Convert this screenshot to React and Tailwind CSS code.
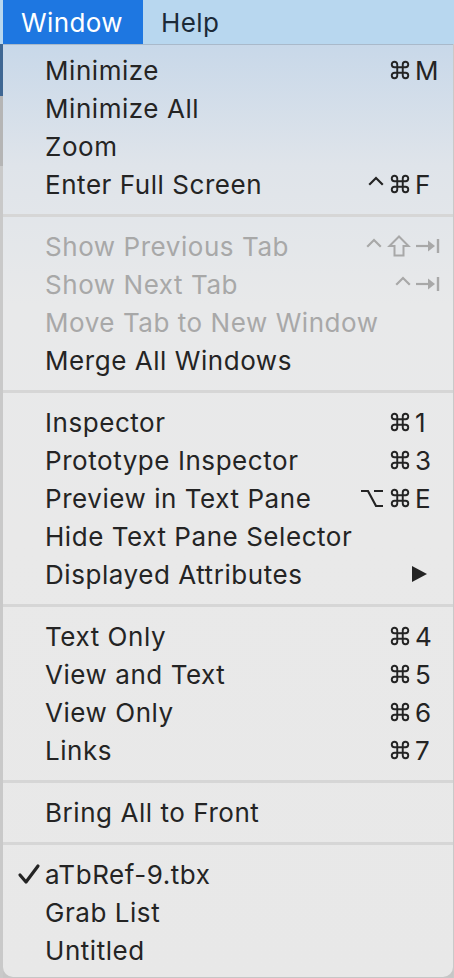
import React from "react";

const TXT = "#242424";
const DIS = "#a8a8a8";

function Cmd({ c }) {
  return (
    <svg width="22" height="22" viewBox="0 0 24 24" fill="none" stroke={c} strokeWidth="2.1" strokeLinecap="round" strokeLinejoin="round">
      <path d="M15 6v12a3 3 0 1 0 3-3H6a3 3 0 1 0 3 3V6a3 3 0 1 0-3 3h12a3 3 0 1 0-3-3" />
    </svg>
  );
}
function Ctrl({ c }) {
  return (
    <svg width="16" height="22" viewBox="0 0 16 22" fill="none" stroke={c} strokeWidth="2.2" strokeLinecap="square">
      <path d="M2 11 L8 5 L14 11" />
    </svg>
  );
}
function Shift({ c }) {
  return (
    <svg width="24" height="24" viewBox="0 0 24 24" fill="none" stroke={c} strokeWidth="2" strokeLinejoin="miter">
      <path d="M12 2.5 L2.5 12 H7.5 V21.5 H16.5 V12 H21.5 Z" />
    </svg>
  );
}
function Opt({ c }) {
  return (
    <svg width="24" height="22" viewBox="0 0 24 22" fill="none" stroke={c} strokeWidth="2.2">
      <path d="M1 4 H8 L16 19 H23 M14 4 H23" />
    </svg>
  );
}
function Tab({ c }) {
  return (
    <svg width="25" height="22" viewBox="0 0 25 22" fill="none">
      <path d="M1 11 H15" stroke={c} strokeWidth="2.2" />
      <path d="M13 5.5 L20 11 L13 16.5 Z" fill={c} />
      <path d="M23 4 V18" stroke={c} strokeWidth="2.4" />
    </svg>
  );
}

function Shortcut({ mods = [], k, c }) {
  return (
    <div className="flex items-center ml-auto">
      <div className="flex items-center justify-end gap-[5px]">
        {mods.map((m, i) => {
          if (m === "ctrl") return <Ctrl key={i} c={c} />;
          if (m === "cmd") return <Cmd key={i} c={c} />;
          if (m === "shift") return <Shift key={i} c={c} />;
          if (m === "opt") return <Opt key={i} c={c} />;
          return null;
        })}
      </div>
      <div className="w-[28px] ml-[4px] flex items-center">
        {k === "tab" ? <Tab c={c} /> : <span style={{ color: c }}>{k}</span>}
      </div>
    </div>
  );
}

function Item({ label, mods, k, disabled, check, submenu }) {
  const c = disabled ? DIS : TXT;
  return (
    <div className="h-[38px] flex items-center pl-[42px] pr-[10px] relative" style={{ color: c }}>
      {check && (
        <svg className="absolute left-[14px] top-[8px]" width="24" height="22" viewBox="0 0 24 22" fill="none" stroke={TXT} strokeWidth="3.2" strokeLinecap="round" strokeLinejoin="round">
          <path d="M3 12 L9 19 L21 3" />
        </svg>
      )}
      <span>{label}</span>
      {k && <Shortcut mods={mods} k={k} c={c} />}
      {submenu && (
        <svg className="ml-auto mr-[15px]" width="17" height="18" viewBox="0 0 17 18">
          <path d="M1 1 L16 9 L1 17 Z" fill={TXT} />
        </svg>
      )}
    </div>
  );
}

function Sep() {
  return (
    <div className="h-[24px] flex items-center">
      <div className="h-[3px] w-full bg-[#d6d6d6]" />
    </div>
  );
}

export default function App() {
  return (
    <div
      className="w-[454px] h-[978px] bg-[#c6c6c6] flex flex-col overflow-hidden"
      style={{ fontFamily: "Inter, 'Noto Sans', sans-serif" }}
    >
      <div className="h-[44px] bg-[#b8d7ef] flex items-stretch text-[26px] tracking-[0.4px] shrink-0">
        <div className="w-[3px] bg-[#b8d7ef]" />
        <div className="w-[140px] bg-[#1e77e1] text-white flex items-center pl-[18px]">Window</div>
        <div className="flex items-center pl-[18px] text-[#1c2a38]">Help</div>
      </div>
      <div className="flex flex-1">
        <div className="w-[3px] flex flex-col">
          <div className="h-[52px] bg-[#3f6793]" />
          <div className="h-[70px] bg-[#b5b5b5]" />
          <div className="flex-1 bg-[#c9c9c9]" />
        </div>
        <div
          className="w-[450px] h-[933px] rounded-b-[10px] border-t border-[#a9b9ca] pt-[6px] pb-[7px] text-[26px] tracking-[0.55px] bg-[linear-gradient(to_bottom,#c8d8e9_0px,#dfe4ea_120px,#e8e9ea_260px,#e9e9e9_500px,#e8e8e8_933px)]"
        >
          <Item label="Minimize" mods={["cmd"]} k="M" />
          <Item label="Minimize All" />
          <Item label="Zoom" />
          <Item label="Enter Full Screen" mods={["ctrl", "cmd"]} k="F" />
          <Sep />
          <Item label="Show Previous Tab" mods={["ctrl", "shift"]} k="tab" disabled />
          <Item label="Show Next Tab" mods={["ctrl"]} k="tab" disabled />
          <Item label="Move Tab to New Window" disabled />
          <Item label="Merge All Windows" />
          <Sep />
          <Item label="Inspector" mods={["cmd"]} k="1" />
          <Item label="Prototype Inspector" mods={["cmd"]} k="3" />
          <Item label="Preview in Text Pane" mods={["opt", "cmd"]} k="E" />
          <Item label="Hide Text Pane Selector" />
          <Item label="Displayed Attributes" submenu />
          <Sep />
          <Item label="Text Only" mods={["cmd"]} k="4" />
          <Item label="View and Text" mods={["cmd"]} k="5" />
          <Item label="View Only" mods={["cmd"]} k="6" />
          <Item label="Links" mods={["cmd"]} k="7" />
          <Sep />
          <Item label="Bring All to Front" />
          <Sep />
          <Item label="aTbRef-9.tbx" check />
          <Item label="Grab List" />
          <Item label="Untitled" />
        </div>
        <div className="w-[1px] bg-[#c9c9c9]" />
      </div>
    </div>
  );
}
